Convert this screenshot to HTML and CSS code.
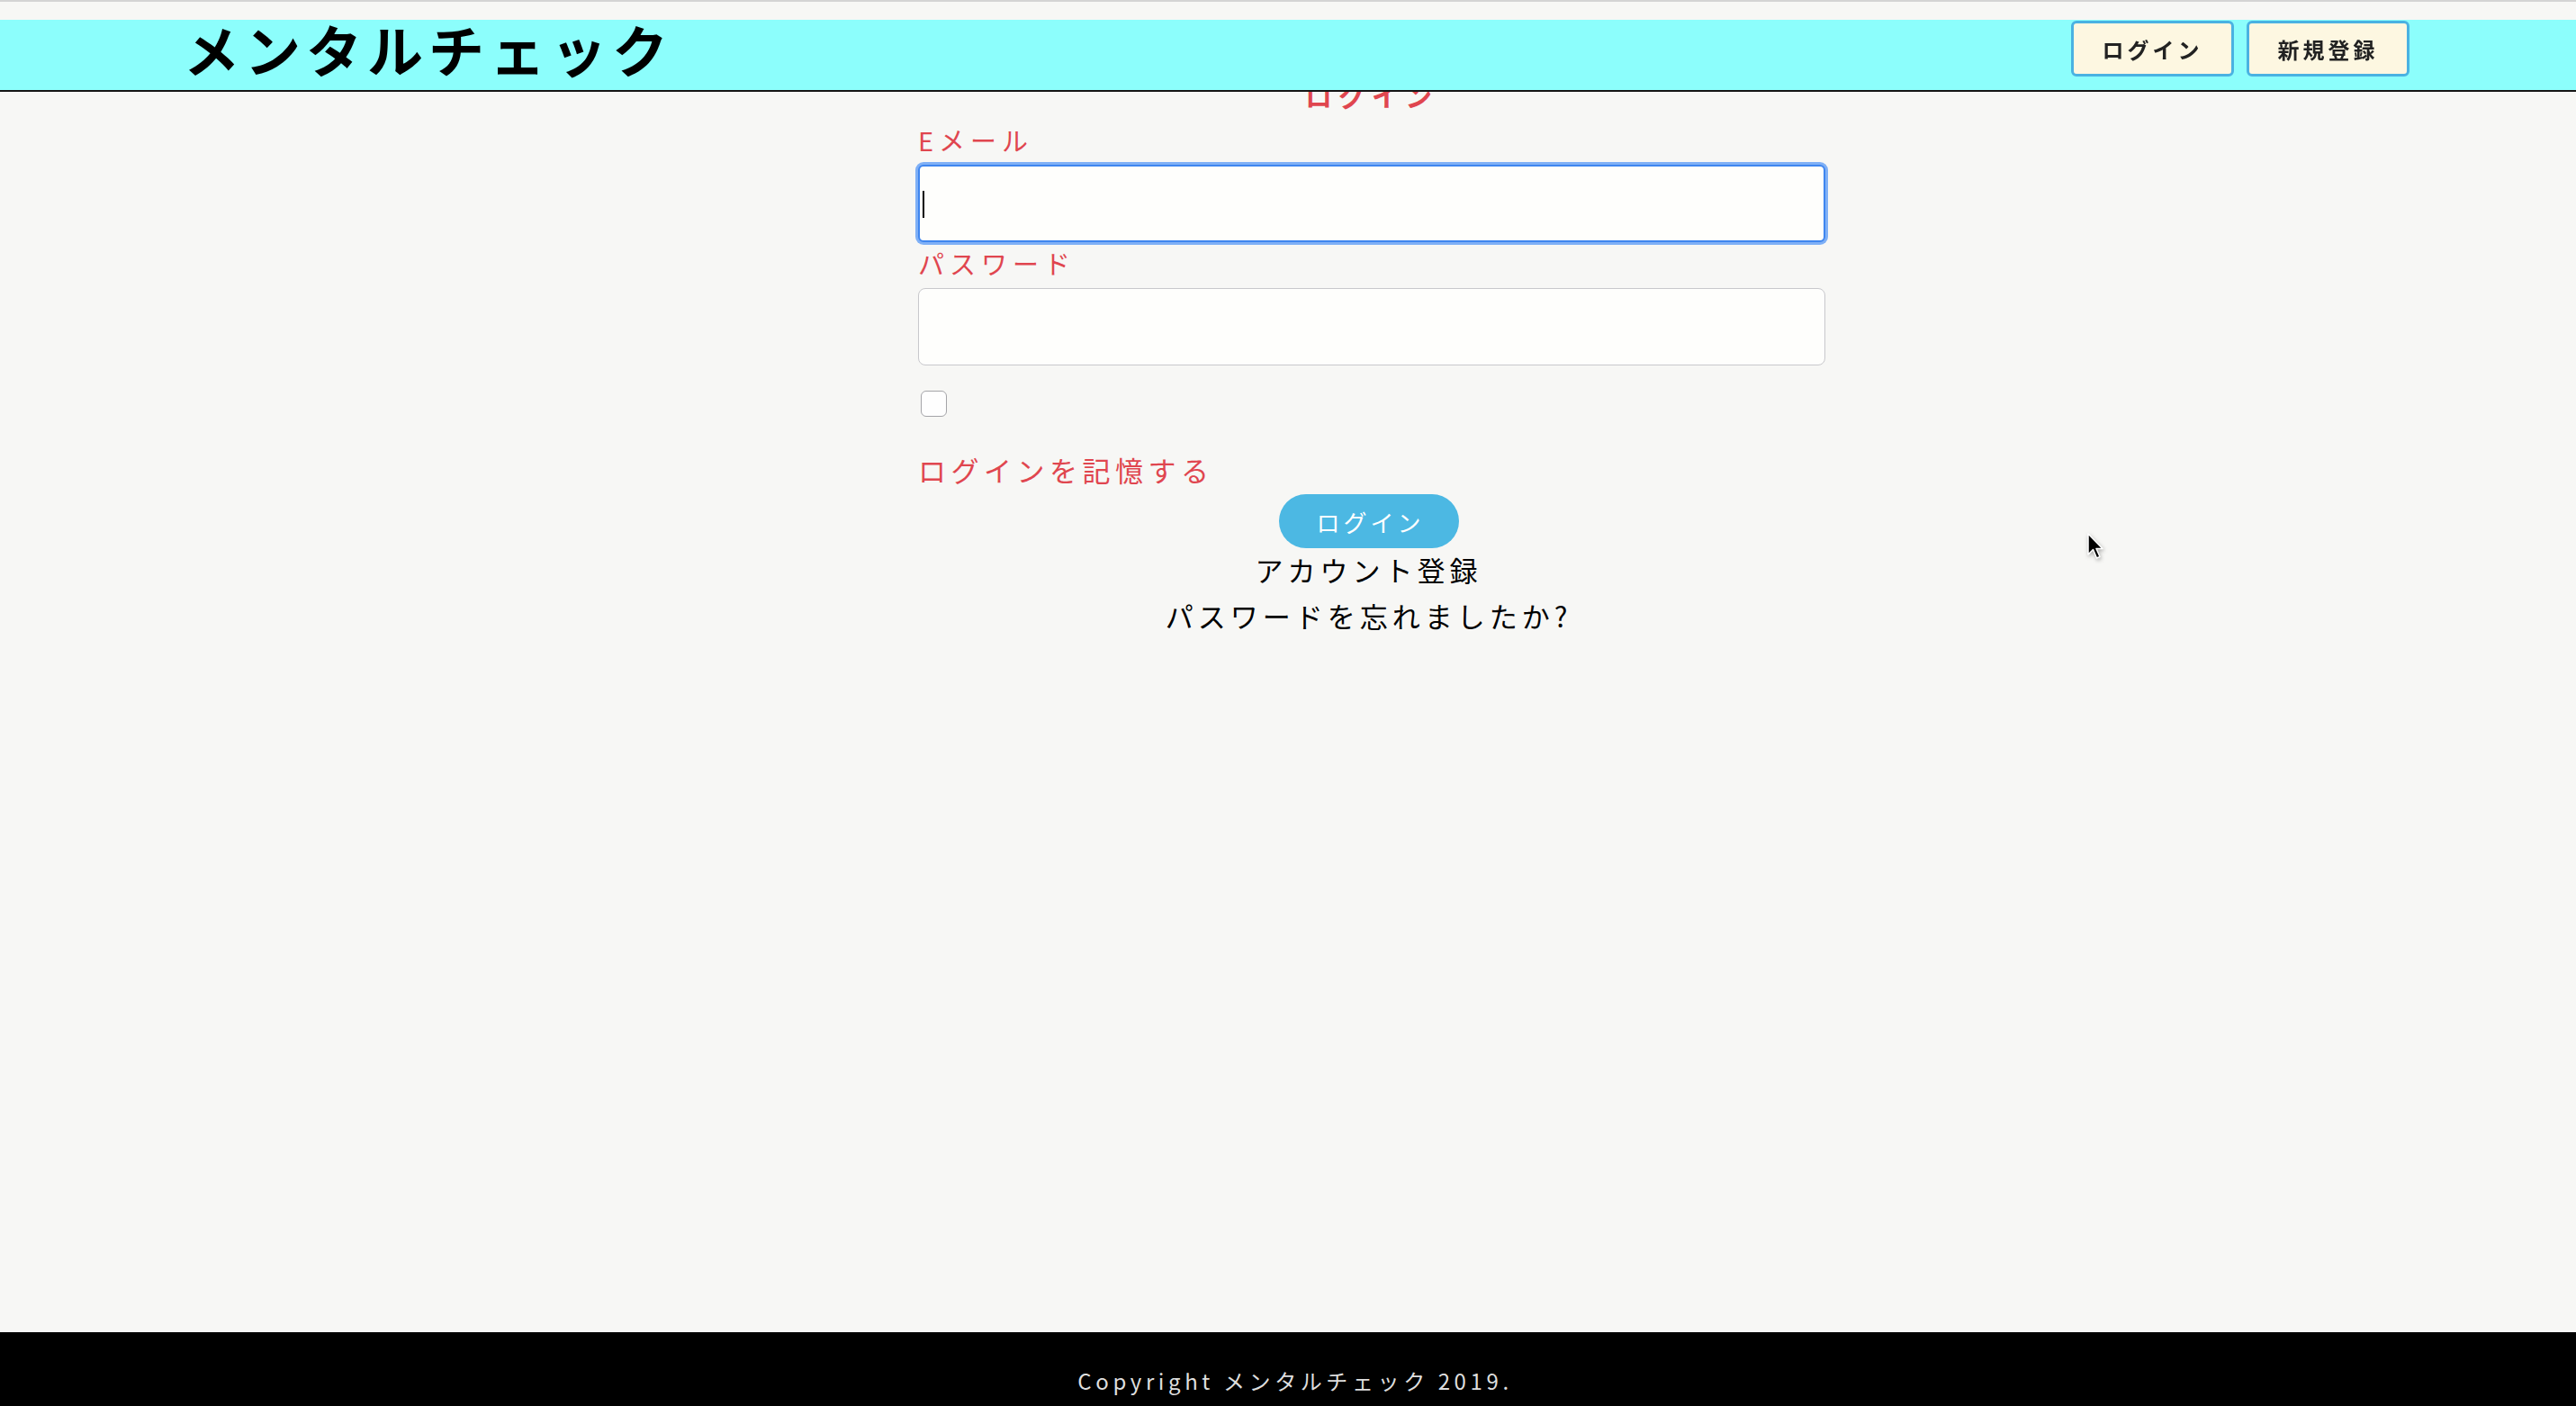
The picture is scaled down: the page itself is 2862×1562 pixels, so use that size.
FILE: index.html
```html
<!DOCTYPE html>
<html lang="ja">
<head>
<meta charset="utf-8">
<title>メンタルチェック</title>
<link rel="stylesheet" href="styles.css">
</head>
<body>
<div class="page">
  <div class="topline"></div>
  <header class="site-header">
    <h1 class="logo">メンタルチェック</h1>
    <nav class="nav">
      <a class="nav-btn" href="#">ログイン</a>
      <a class="nav-btn" href="#">新規登録</a>
    </nav>
  </header>
  <main class="main">
    <form class="login-form">
      <h2 class="form-title">ログイン</h2>
      <label class="field-label" for="email">Eメール</label>
      <div class="input-wrap caret">
        <input class="text-input focused" id="email" type="email">
      </div>
      <label class="field-label" for="password">パスワード</label>
      <div class="input-wrap">
        <input class="text-input" id="password" type="password">
      </div>
      <div class="check-row">
        <input class="checkbox" id="remember" type="checkbox">
      </div>
      <label class="remember-label" for="remember">ログインを記憶する</label>
      <div class="actions">
        <button class="submit-btn" type="button">ログイン</button>
        <a class="link" href="#">アカウント登録</a>
        <a class="link" href="#">パスワードを忘れましたか?</a>
      </div>
    </form>
  </main>
  <footer class="site-footer">Copyright メンタルチェック 2019.</footer>
  <svg class="mouse-cursor" width="20" height="32" viewBox="0 0 20 32" aria-hidden="true">
    <path d="M2 2 L2 25 L7.5 19.5 L11.5 29 L15 27.5 L11 18.5 L18 18.5 Z" fill="#000" stroke="#fff" stroke-width="1.5" stroke-linejoin="round"/>
  </svg>
</div>
</body>
</html>
```
FILE: styles.css
```css
html, body {
  margin: 0;
  padding: 0;
}
body {
  background: #f7f7f5;
  font-family: "Noto Sans CJK JP", "Noto Sans", sans-serif;
  color: #000;
}
.page {
  min-height: 100vh;
  display: flex;
  flex-direction: column;
}
.topline {
  height: 2px;
  background: #d4d4d4;
}
.site-header {
  position: fixed;
  top: 22px;
  left: 0;
  right: 0;
  height: 80px;
  box-sizing: border-box;
  background: #8cfefc;
  border-bottom: 2px solid #151515;
  display: flex;
  align-items: center;
  justify-content: space-between;
  padding: 0 185px 14px 204px;
  z-index: 10;
}
.logo {
  margin: 0;
  font-size: 62px;
  font-weight: 700;
  letter-spacing: 6px;
  line-height: 1;
  color: #000;
}
.nav {
  display: flex;
  gap: 14px;
}
.nav-btn {
  box-sizing: border-box;
  width: 181px;
  height: 62px;
  display: flex;
  align-items: center;
  justify-content: center;
  background: #fdf7e1;
  border: 3px solid #4ab2e2;
  border-radius: 6px;
  font-size: 24px;
  font-weight: 700;
  letter-spacing: 4px;
  color: #222;
  text-decoration: none;
}
.main {
  flex: 1;
  padding-top: 81px;
}
.login-form {
  width: 1008px;
  margin-left: 1020px;
  display: flex;
  flex-direction: column;
}
.form-title {
  margin: 0;
  text-align: center;
  font-size: 30px;
  line-height: 45px;
  font-weight: 700;
  letter-spacing: 7px;
  color: #e0464f;
}
.field-label {
  font-size: 29px;
  line-height: 44px;
  letter-spacing: 6px;
  color: #e0464f;
}
.field-label:first-of-type {
  margin-top: 5px;
}
.input-wrap {
  position: relative;
  margin-top: 6px;
}
.input-wrap + .field-label {
  margin-top: 1px;
}
.text-input {
  box-sizing: border-box;
  display: block;
  width: 100%;
  height: 86px;
  border: 1.5px solid #c8c8cc;
  border-radius: 8px;
  background: #fefefc;
  outline: none;
  padding: 0 6px;
  font-size: 29px;
}
.text-input.focused {
  border: 2px solid #3f86ef;
  box-shadow: 0 0 0 3px #7fb0f6;
  border-radius: 6px;
}
.caret::after {
  content: "";
  position: absolute;
  left: 5px;
  top: 29px;
  width: 2px;
  height: 30px;
  background: #000;
}
.check-row {
  margin-top: 28px;
  display: flex;
}
.checkbox {
  appearance: none;
  -webkit-appearance: none;
  box-sizing: border-box;
  width: 29px;
  height: 29px;
  margin: 0 0 0 3px;
  border: 1.5px solid #a4a4a8;
  border-radius: 6px;
  background: #fefefe;
}
.remember-label {
  margin-top: 36px;
  font-size: 31px;
  line-height: 46px;
  letter-spacing: 5.5px;
  color: #e0464f;
}
.actions {
  display: flex;
  flex-direction: column;
  align-items: center;
  margin-top: 4px;
  padding-right: 7px;
}
.submit-btn {
  width: 200px;
  height: 60px;
  border: none;
  border-radius: 30px;
  background: #4cb8e3;
  color: #fff;
  font-family: "Noto Sans CJK JP", "Noto Sans", sans-serif;
  font-size: 26px;
  letter-spacing: 4px;
  padding: 0 0 0 4px;
}
.submit-btn + .link {
  margin-top: -2px;
}
.link {
  font-size: 31px;
  line-height: 51px;
  letter-spacing: 5px;
  color: #000;
  text-decoration: none;
}
.site-footer {
  height: 82px;
  box-sizing: border-box;
  background: #000;
  color: #dedede;
  text-align: center;
  font-size: 24px;
  line-height: 36px;
  padding: 36px 0 0 16px;
  letter-spacing: 4.6px;
}
.mouse-cursor {
  position: absolute;
  left: 2318px;
  top: 591px;
  filter: drop-shadow(1px 2px 2px rgba(0, 0, 0, 0.3));
}
```
